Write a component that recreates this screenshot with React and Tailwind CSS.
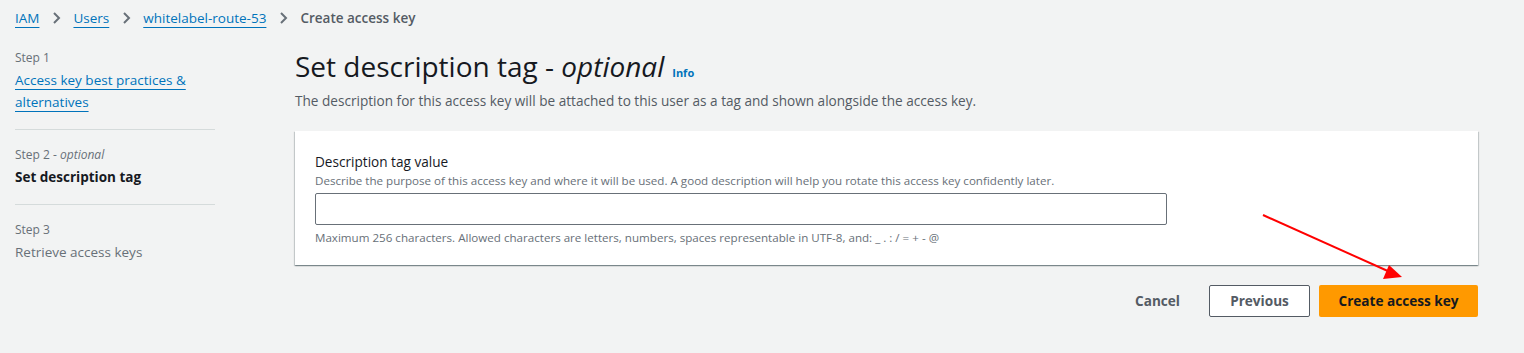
import React from 'react';

const Chevron = () => (
  <svg width="16" height="16" viewBox="0 0 16 16" className="mx-[9px] shrink-0">
    <path d="M6 3l5 5-5 5" fill="none" stroke="#687078" strokeWidth="2" />
  </svg>
);

const Crumb = ({ children }) => (
  <a href="#" className="text-[#0073bb] underline underline-offset-[4px] decoration-1">
    {children}
  </a>
);

const App = () => {
  return (
    <div
      className="relative w-[1524px] h-[353px] bg-[#f2f3f3] text-[#16191f] overflow-hidden"
      style={{ fontFamily: '"Open Sans", "Liberation Sans", sans-serif' }}
    >
      {/* Breadcrumbs */}
      <nav className="flex items-center h-[18px] mt-[9px] ml-[15px] text-[13.5px]">
        <Crumb>IAM</Crumb>
        <Chevron />
        <Crumb>Users</Crumb>
        <Chevron />
        <Crumb>whitelabel-route-53</Crumb>
        <Chevron />
        <span className="text-[#545b64] font-semibold">Create access key</span>
      </nav>

      <div className="flex mt-[20px]">
        {/* Wizard steps */}
        <aside className="w-[200px] ml-[15px] mt-[3px] shrink-0">
          <div className="text-[12px] leading-[16px] text-[#687078]">Step 1</div>
          <a href="#" className="block mt-[3px] text-[13.5px] leading-[22px] text-[#0073bb] underline underline-offset-[4px]">
            Access key best practices &amp; alternatives
          </a>
          <div className="border-t border-[#d5dbdb] mt-[16px] mb-[17px]" />
          <div className="text-[12px] leading-[16px] text-[#687078]">
            Step 2 - <i>optional</i>
          </div>
          <div className="mt-[5px] text-[13.5px] leading-[18px] font-bold">Set description tag</div>
          <div className="border-t border-[#d5dbdb] mt-[18px] mb-[17px]" />
          <div className="text-[12px] leading-[16px] text-[#687078]">Step 3</div>
          <div className="mt-[5px] text-[13.5px] leading-[18px] text-[#687078]">Retrieve access keys</div>
        </aside>

        {/* Main */}
        <main className="ml-[80px] mt-[1px] w-[1183px]">
          <div className="flex items-baseline">
            <h1 className="text-[28px] leading-[36px] font-normal">
              Set description tag - <i>optional</i>
            </h1>
            <a href="#" className="ml-[8px] text-[11px] font-bold text-[#0073bb]">Info</a>
          </div>
          <p className="mt-[7px] text-[13.6px] leading-[20px] text-[#545b64]">
            The description for this access key will be attached to this user as a tag and shown alongside the access key.
          </p>

          <section className="mt-[20px] bg-white shadow-[0_1px_1px_0_rgba(0,28,36,0.3),1px_1px_1px_0_rgba(0,28,36,0.15),-1px_1px_1px_0_rgba(0,28,36,0.15)] px-[20px] pt-[22px] pb-[19px]">
            <label className="block text-[13.6px] leading-[18px] font-medium">Description tag value</label>
            <div className="mt-[2px] text-[11.6px] leading-[16px] text-[#687078]">
              Describe the purpose of this access key and where it will be used. A good description will help you rotate this access key confidently later.
            </div>
            <input
              type="text"
              className="mt-[4px] block w-[852px] h-[32px] border border-[#687078] rounded-[2px] px-[8px] text-[14px] bg-white outline-none"
            />
            <div className="mt-[5px] text-[11.6px] leading-[16px] text-[#687078]">
              Maximum 256 characters. Allowed characters are letters, numbers, spaces representable in UTF-8, and: _ . : / = + - @
            </div>
          </section>

          <div className="flex justify-end items-center mt-[20px] gap-[9px]">
            <button className="px-[20px] h-[32px] text-[13.6px] font-bold text-[#545b64]">Cancel</button>
            <button className="w-[101px] h-[32px] border border-[#545b64] rounded-[2px] bg-white text-[13.6px] font-bold text-[#545b64]">
              Previous
            </button>
            <button className="w-[159px] h-[32px] rounded-[2px] bg-[#ff9900] text-[13.6px] font-bold text-[#16191f]">
              Create access key
            </button>
          </div>
        </main>
      </div>

      {/* Annotation arrow */}
      <svg className="absolute left-0 top-0 pointer-events-none" width="1524" height="353">
        <line x1="1263" y1="215" x2="1390" y2="272" stroke="#ff0000" strokeWidth="2" />
        <polygon points="1402,277 1383,279 1389,265" fill="#ff0000" />
      </svg>
    </div>
  );
};

export default App;
